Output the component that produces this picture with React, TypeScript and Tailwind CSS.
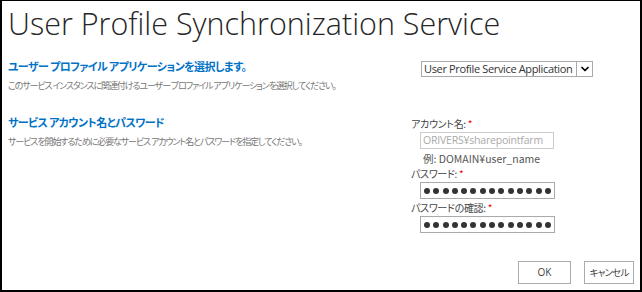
import { ChevronDown } from 'lucide-react';

const jp = '[font-family:"Noto_Sans_CJK_JP",sans-serif] [font-feature-settings:"palt"]';
const latin = "[font-family:'Open_Sans',sans-serif]";

function Label({ text }: { text: string }) {
  return (
    <div className={`${jp} text-[10px] text-[#444] leading-[14px] tracking-[-0.3px]`}>
      {text} <span className="text-[#e00]">*</span>
    </div>
  );
}

function Dots() {
  return (
    <div className="flex items-center gap-[3.3px] px-[3px]">
      {Array.from({ length: 14 }).map((_, i) => (
        <span key={i} className="block w-[6px] h-[6px] rounded-full bg-[#333]" />
      ))}
    </div>
  );
}

export default function App() {
  return (
    <div className="w-[642px] h-[292px] bg-white border-2 border-black border-t-[1px] box-border flex flex-col overflow-hidden">
      <h1 className={`pl-[6px] pt-[3px] text-[30.5px] font-light leading-[38px] text-[#262626] whitespace-nowrap ${latin}`}>
        User Profile Synchronization Service
      </h1>

      <div className="flex mt-[16px] h-[50px]">
        <div className="w-[413px] pl-[6px]">
          <div className={`${jp} text-[11px] font-bold text-[#0072c6] leading-[16px] tracking-[-0.6px]`}>
            ユーザー プロファイル アプリケーションを選択します。
          </div>
          <div className={`${jp} mt-[6px] text-[9px] text-[#777] leading-[12px] whitespace-pre tracking-[-1.1px]`}>
            このサービス インスタンスに関連付けるユーザー プロファイル アプリケーションを選択してください。
          </div>
        </div>
        <div className="pl-[6px] pt-[3px]">
          <div className="flex h-[16px] border border-[#aaa]">
            <div className={`w-[154px] pl-[2px] text-[11px] leading-[14px] text-[#333] whitespace-nowrap overflow-hidden tracking-[-0.35px] ${latin}`}>
              User Profile Service Application
            </div>
            <div className="w-[16px] border-l border-[#aaa] bg-white flex items-center justify-center">
              <ChevronDown className="w-[12px] h-[12px] text-black" strokeWidth={3.5} />
            </div>
          </div>
        </div>
      </div>

      <div className="flex mt-[6px]">
        <div className="w-[409px] pl-[6px]">
          <div className={`${jp} text-[11px] font-bold text-[#0072c6] leading-[16px] tracking-[-0.6px]`}>
            サービス アカウント名とパスワード
          </div>
          <div className={`${jp} mt-[6px] text-[9px] text-[#777] leading-[12px] whitespace-pre tracking-[-1.1px]`}>
            サービスを開始するために必要なサービス アカウント名とパスワードを指定してください。
          </div>
        </div>
        <div className="flex flex-col pt-[3px]">
          <Label text="アカウント名:" />
          <div className={`ml-[9px] mt-[1px] w-[134px] h-[17px] border border-[#ccc] pl-[2px] text-[10.5px] leading-[15px] text-[#aaa] whitespace-nowrap overflow-hidden tracking-[-0.2px] ${latin}`}>
            ORIVERS¥sharepointfarm
          </div>
          <div className={`ml-[12px] mt-[3px] text-[10.5px] leading-[13px] text-[#555] ${jp}`}>
            例: DOMAIN¥user_name
          </div>
          <div className="mt-[2px]">
            <Label text="パスワード:" />
          </div>
          <div className="ml-[9px] mt-[1px] w-[135px] h-[17px] border border-[#aaa] flex items-center">
            <Dots />
          </div>
          <div className="mt-[2px]">
            <Label text="パスワードの確認:" />
          </div>
          <div className="ml-[9px] mt-[1px] w-[135px] h-[17px] border border-[#aaa] flex items-center">
            <Dots />
          </div>
        </div>
      </div>

      <div className="flex-1" />
      <div className="flex justify-end gap-[13px] pr-[6px] pb-[6px]">
        <button className={`w-[53px] h-[23px] border border-[#ababab] bg-white text-[10px] text-[#444] ${latin}`}>
          OK
        </button>
        <button className={`w-[50px] h-[23px] border border-[#ababab] bg-white text-[9.5px] text-[#444] tracking-[-0.8px] ${jp}`}>
          キャンセル
        </button>
      </div>
    </div>
  );
}
